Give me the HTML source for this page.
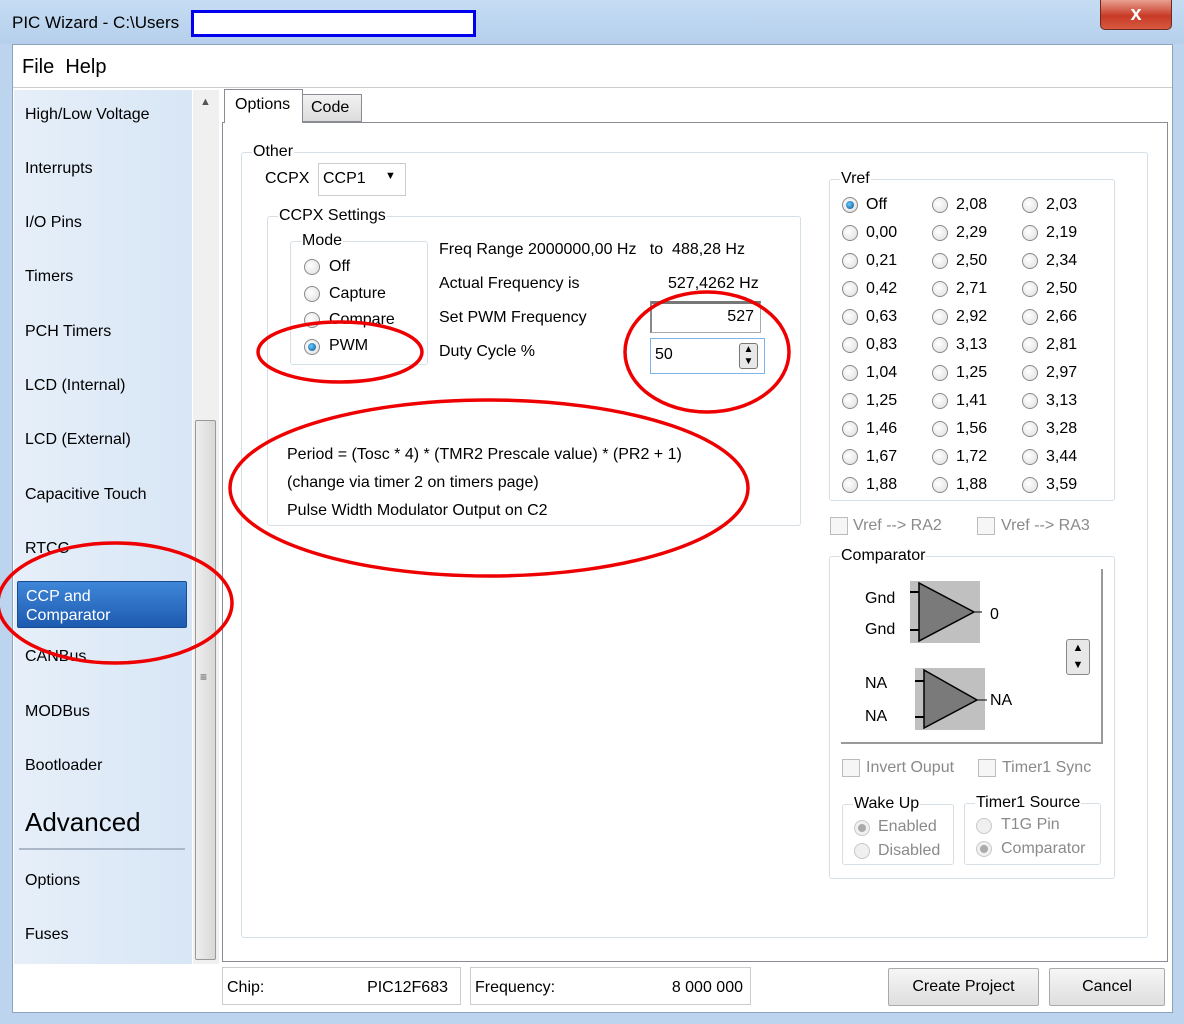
<!DOCTYPE html>
<html><head><style>
*{margin:0;padding:0;box-sizing:border-box}
body{width:1184px;height:1024px;overflow:hidden;background:#bcd4ee;font-family:"Liberation Sans",sans-serif;font-size:16px;color:#000;position:relative}
.a{position:absolute;white-space:nowrap}
.rad{position:absolute;width:16px;height:16px;border-radius:50%;border:1px solid #8a8a8a;background:radial-gradient(circle at 40% 40%,#fff,#ddd)}
.rad.on::after{content:"";position:absolute;left:3px;top:3px;width:8px;height:8px;border-radius:50%;background:radial-gradient(circle at 40% 40%,#6cf,#0a4c8c)}
.rad.dis{border-color:#c8c8c8;background:#f0f0f0}
.rad.dis.on::after{background:#aaa}
.grp{position:absolute;border:1px solid #d5dfe5;border-radius:3px}
.gl{position:absolute;background:#fff;padding:0 1px;top:-10px;left:10px;line-height:18px}
.cb{position:absolute;width:18px;height:18px;border:1px solid #bbb;background:#f6f6f6}
.btn{position:absolute;border:1px solid #aaa;border-radius:2px;background:linear-gradient(#f6f6f6,#dedede);text-align:center;line-height:36px}
.gray{color:#8a8a8a}
.side{position:absolute;left:25px}
</style></head><body>
<div class="a" style="left:0;top:0;width:1184px;height:44px;background:linear-gradient(#c5dcf3,#b5cfec)"></div>
<div class="a" style="left:12px;top:13px;font-size:17px">PIC Wizard - C:\Users</div>
<div class="a" style="left:191px;top:10px;width:285px;height:27px;border:3px solid #0000ee;background:#fff"></div>
<div class="a" style="left:1100px;top:0;width:72px;height:30px;border:1px solid #6b2a22;border-top:none;border-radius:0 0 5px 5px;background:linear-gradient(#e8a090,#c83a26 55%,#d75a40);color:#fff;text-align:center;font-weight:bold;font-size:20px;line-height:28px">x</div>
<div class="a" style="left:12px;top:44px;width:1161px;height:969px;background:#fff;border:1px solid #8ea4bd"></div>
<div class="a" style="left:13px;top:45px;width:1159px;height:43px;background:#fff;border-bottom:1px solid #ccc"></div>
<div class="a" style="left:22px;top:56px;font-size:20px">File&nbsp; Help</div>
<div class="a" style="left:14px;top:90px;width:178px;height:874px;background:linear-gradient(90deg,#e6eff9,#d8e6f5)"></div>
<div class="a" style="left:193px;top:90px;width:26px;height:874px;background:#f0f0f0"></div>
<div class="a" style="left:200px;top:96px;font-size:11px;color:#555">▲</div>
<div class="a" style="left:200px;top:944px;font-size:11px;color:#555">▼</div>
<div class="a" style="left:195px;top:420px;width:21px;height:540px;background:linear-gradient(90deg,#eee,#d8d8d8);border:1px solid #999;border-radius:2px"></div>
<div class="a" style="left:200px;top:670px;font-size:12px;color:#555">≡</div>
<div class="side a" style="top:106px">High/Low Voltage</div>
<div class="side a" style="top:160px">Interrupts</div>
<div class="side a" style="top:214px">I/O Pins</div>
<div class="side a" style="top:268px">Timers</div>
<div class="side a" style="top:323px">PCH Timers</div>
<div class="side a" style="top:377px">LCD (Internal)</div>
<div class="side a" style="top:431px">LCD (External)</div>
<div class="side a" style="top:486px">Capacitive Touch</div>
<div class="side a" style="top:540px">RTCC</div>
<div class="a" style="left:17px;top:581px;width:170px;height:47px;background:linear-gradient(#3f86d8,#1d5bb0);border:1px solid #1a4a90;border-radius:2px;color:#fff;padding:5px 8px;line-height:19px">CCP and<br>Comparator</div>
<div class="side a" style="top:648px">CANBus</div>
<div class="side a" style="top:703px">MODBus</div>
<div class="side a" style="top:757px">Bootloader</div>
<div class="side a" style="top:807px;font-size:26px">Advanced</div>
<div class="a" style="left:19px;top:848px;width:166px;height:2px;background:#aab8c8"></div>
<div class="side a" style="top:872px">Options</div>
<div class="side a" style="top:926px">Fuses</div>
<div class="a" style="left:222px;top:122px;width:946px;height:840px;border:1px solid #898c95;background:#fff"></div>
<div class="a" style="left:224px;top:89px;width:79px;height:34px;border:1px solid #898c95;border-bottom:none;background:#fff;padding:6px 10px">Options</div>
<div class="a" style="left:302px;top:94px;width:60px;height:28px;border:1px solid #898c95;background:linear-gradient(#f2f2f2,#dcdcdc);padding:4px 8px">Code</div>
<div class="grp" style="left:241px;top:152px;width:907px;height:786px"><span class="gl" style="left:10px">Other</span></div>
<div class="a" style="left:265px;top:170px">CCPX</div>
<div class="a" style="left:318px;top:163px;width:88px;height:33px;border:1px solid #ccc;padding:6px 4px">CCP1 <span style="position:absolute;left:66px;top:6px;font-size:11px">▼</span></div>
<div class="grp" style="left:267px;top:216px;width:534px;height:310px"><span class="gl">CCPX Settings</span></div>
<div class="grp" style="left:290px;top:241px;width:138px;height:124px"><span class="gl">Mode</span></div>
<div class="rad" style="left:304px;top:259px"></div><div class="a" style="left:329px;top:258px">Off</div>
<div class="rad" style="left:304px;top:286px"></div><div class="a" style="left:329px;top:285px">Capture</div>
<div class="rad" style="left:304px;top:312px"></div><div class="a" style="left:329px;top:311px">Compare</div>
<div class="rad on" style="left:304px;top:339px"></div><div class="a" style="left:329px;top:337px">PWM</div>
<div class="a" style="left:439px;top:241px">Freq Range 2000000,00 Hz &nbsp; to &nbsp;488,28 Hz</div>
<div class="a" style="left:439px;top:275px">Actual Frequency is</div>
<div class="a" style="left:668px;top:275px">527,4262 Hz</div>
<div class="a" style="left:439px;top:309px">Set PWM Frequency</div>
<div class="a" style="left:650px;top:301px;width:111px;height:32px;border:1px solid #aaa;border-top:3px solid #777;border-left:2px solid #888;text-align:right;padding:4px 6px">527</div>
<div class="a" style="left:439px;top:343px">Duty Cycle %</div>
<div class="a" style="left:650px;top:338px;width:115px;height:36px;border:1px solid #7eb4ea;padding:7px 4px">50<span style="position:absolute;left:88px;top:4px;width:19px;height:26px;font-size:10px;line-height:12px;text-align:center;border:1px solid #777;border-radius:3px;background:#e8e8e8">▲<br>▼</span></div>
<div class="a" style="left:287px;top:446px">Period = (Tosc * 4) * (TMR2 Prescale value) * (PR2 + 1)</div>
<div class="a" style="left:287px;top:474px">(change via timer 2 on timers page)</div>
<div class="a" style="left:287px;top:502px">Pulse Width Modulator Output on C2</div>
<div class="grp" style="left:829px;top:179px;width:286px;height:322px"><span class="gl">Vref</span></div>
<div id="vref"></div>
<div class="cb" style="left:830px;top:517px"></div><div class="a gray" style="left:853px;top:517px">Vref --&gt; RA2</div>
<div class="cb" style="left:977px;top:517px"></div><div class="a gray" style="left:1001px;top:517px">Vref --&gt; RA3</div>
<div class="grp" style="left:829px;top:556px;width:286px;height:323px"><span class="gl">Comparator</span></div>
<div class="a" style="left:841px;top:569px;width:262px;height:175px;border-right:2px solid #999;border-bottom:2px solid #999"></div>
<div class="a" style="left:865px;top:590px">Gnd</div><div class="a" style="left:865px;top:621px">Gnd</div>
<svg class="a" style="left:910px;top:581px" width="100" height="64"><rect x="0" y="0" width="70" height="62" fill="#c0c0c0"/><line x1="0" y1="11" x2="9" y2="11" stroke="#000" stroke-width="2"/><line x1="0" y1="49" x2="9" y2="49" stroke="#000" stroke-width="2"/><polygon points="9,2 9,60 64,31" fill="#7a7a7a" stroke="#000" stroke-width="1.5"/><line x1="64" y1="31" x2="72" y2="31" stroke="#000"/></svg>
<div class="a" style="left:990px;top:606px">0</div>
<div class="a" style="left:865px;top:675px">NA</div><div class="a" style="left:865px;top:708px">NA</div>
<svg class="a" style="left:915px;top:668px" width="80" height="64"><rect x="0" y="0" width="70" height="62" fill="#c0c0c0"/><line x1="0" y1="13" x2="9" y2="13" stroke="#000" stroke-width="2"/><line x1="0" y1="49" x2="9" y2="49" stroke="#000" stroke-width="2"/><polygon points="9,2 9,60 62,32" fill="#7a7a7a" stroke="#000" stroke-width="1.5"/><line x1="62" y1="32" x2="72" y2="32" stroke="#000"/></svg>
<div class="a" style="left:990px;top:692px">NA</div>
<div class="a" style="left:1066px;top:639px;width:24px;height:36px;font-size:11px;line-height:17px;text-align:center;border:1px solid #888;border-radius:3px;background:#e8e8e8">▲<br>▼</div>
<div class="cb" style="left:842px;top:759px"></div><div class="a gray" style="left:866px;top:759px">Invert Ouput</div>
<div class="cb" style="left:978px;top:759px"></div><div class="a gray" style="left:1002px;top:759px">Timer1 Sync</div>
<div class="grp" style="left:842px;top:804px;width:112px;height:61px"><span class="gl">Wake Up</span></div>
<div class="rad dis on" style="left:854px;top:820px"></div><div class="a gray" style="left:878px;top:818px">Enabled</div>
<div class="rad dis" style="left:854px;top:843px"></div><div class="a gray" style="left:878px;top:842px">Disabled</div>
<div class="grp" style="left:964px;top:803px;width:137px;height:62px"><span class="gl">Timer1 Source</span></div>
<div class="rad dis" style="left:976px;top:818px"></div><div class="a gray" style="left:1001px;top:816px">T1G Pin</div>
<div class="rad dis on" style="left:976px;top:841px"></div><div class="a gray" style="left:1001px;top:840px">Comparator</div>
<div class="a" style="left:222px;top:967px;width:239px;height:38px;border:1px solid #ccc;padding:11px 4px">Chip:<span style="position:absolute;right:12px">PIC12F683</span></div>
<div class="a" style="left:470px;top:967px;width:281px;height:38px;border:1px solid #ccc;padding:11px 4px">Frequency:<span style="position:absolute;right:7px">8 000 000</span></div>
<div class="btn" style="left:888px;top:968px;width:151px;height:38px">Create Project</div>
<div class="btn" style="left:1049px;top:968px;width:116px;height:38px">Cancel</div>
<svg class="a" style="left:0;top:0" width="1184" height="1024"><g fill="none" stroke="#e00" stroke-width="3.5">
<ellipse cx="340" cy="352" rx="82" ry="30"/>
<ellipse cx="707" cy="352" rx="82" ry="60"/>
<ellipse cx="489" cy="488" rx="259" ry="88"/>
<ellipse cx="115" cy="603" rx="117" ry="60"/>
</g></svg>
<script>
var c=[["Off","0,00","0,21","0,42","0,63","0,83","1,04","1,25","1,46","1,67","1,88"],["2,08","2,29","2,50","2,71","2,92","3,13","1,25","1,41","1,56","1,72","1,88"],["2,03","2,19","2,34","2,50","2,66","2,81","2,97","3,13","3,28","3,44","3,59"]],h="";
for(var j=0;j<3;j++)for(var i=0;i<11;i++){var x=842+j*90,y=197+i*28;h+='<div class="rad'+(i==0&&j==0?' on':'')+'" style="left:'+x+'px;top:'+y+'px"></div><div class="a" style="left:'+(x+24)+'px;top:'+(y-1)+'px">'+c[j][i]+'</div>';}
document.getElementById("vref").innerHTML=h;
</script>
</body></html>
